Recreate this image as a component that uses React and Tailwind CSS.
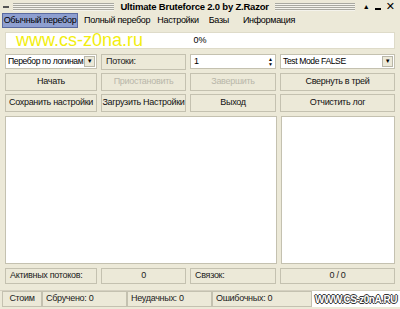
const font = { fontFamily: '"Liberation Sans", "DejaVu Sans", sans-serif' }

function Stripes({ className }) {
  return (
    <div
      className={`h-[8px] bg-[repeating-linear-gradient(to_bottom,#a8a8a0_0px,#a8a8a0_1px,#f4f3ec_1px,#f4f3ec_2px)] ${className}`}
    ></div>
  )
}

function Btn({ children, disabled }) {
  return (
    <div
      className={`h-[18px] flex items-center justify-center whitespace-nowrap border border-[#c4c1b0] bg-[#ece9d8] text-[9px] tracking-[-0.3px] ${
        disabled ? 'text-[#b9b7aa]' : 'text-[#111]'
      }`}
    >
      {children}
    </div>
  )
}

function Panel({ children, center }) {
  return (
    <div
      className={`h-[16px] flex items-center whitespace-nowrap border border-[#c4c1b0] bg-[#ece9d8] text-[9px] tracking-[-0.3px] text-[#222] px-[4px] ${
        center ? 'justify-center' : ''
      }`}
    >
      {children}
    </div>
  )
}

function Combo({ children }) {
  return (
    <div className="h-[15px] flex items-center justify-between whitespace-nowrap border border-[#c4c1b0] bg-white text-[8.6px] tracking-[-0.4px] pl-[2px] pr-[1px]">
      <span>{children}</span>
      <span className="w-[11px] h-[11px] flex items-center justify-center bg-[#ece9d8] border border-[#b8b6a8] text-[6px]">▼</span>
    </div>
  )
}

export default function App() {
  return (
    <div className="w-[400px] h-[309px] bg-[#ece9d8] flex flex-col text-black overflow-hidden" style={font}>
      {/* Title bar */}
      <div className="h-[13px] flex items-center px-[3px] gap-[4px]">
        <span className="w-[6px] h-[2px] bg-[#555]"></span>
        <Stripes className="flex-1" />
        <span className="text-[9.5px] font-bold leading-none tracking-[-0.2px] px-[2px] whitespace-nowrap">Ultimate Bruteforce 2.0 by Z.Razor</span>
        <Stripes className="w-[80px]" />
        <div className="flex items-center gap-[5px] pl-[4px] pr-[2px] text-[9px] leading-none">
          <span className="text-[7px]">▲</span>
          <span className="w-[6px] h-[2px] bg-black mt-[5px]"></span>
          <span className="text-[11px] font-bold">✕</span>
        </div>
      </div>

      {/* Menu */}
      <div className="h-[15px] flex items-center text-[9px] tracking-[-0.3px] pl-[2px] whitespace-nowrap">
        <span className="h-[15px] w-[76px] flex items-center justify-center bg-[#8e9fd0] border border-[#5a6aa0]">Обычный перебор</span>
        <span className="ml-[6px]">Полный перебор</span>
        <span className="ml-[7px]">Настройки</span>
        <span className="ml-[10px]">Базы</span>
        <span className="ml-[14px]">Информация</span>
      </div>

      <div className="px-[5px] pt-[4px] flex flex-col">
        {/* Progress */}
        <div className="h-[17px] bg-white border border-[#dedbc9] relative flex items-center justify-center text-[9px]">
          <span className="absolute left-[10px] top-[-2px] text-[18px] leading-[19px] text-[#f2ee10]">www.cs-z0na.ru</span>
          <span>0%</span>
        </div>

        {/* Rows */}
        <div className="grid grid-cols-[92px_85px_86px_1fr] gap-x-[4px] gap-y-[3px] mt-[5px]">
          <Combo>Перебор по логинам</Combo>
          <Panel>Потоки:</Panel>
          <div className="h-[15px] flex items-center justify-between border border-[#c4c1b0] bg-white text-[9px] pl-[3px] pr-[2px]">
            <span>1</span>
            <span className="flex flex-col leading-none text-[5px]">
              <span>▲</span>
              <span>▼</span>
            </span>
          </div>
          <Combo>Test Mode FALSE</Combo>

          <Btn>Начать</Btn>
          <Btn disabled>Приостановить</Btn>
          <Btn disabled>Завершить</Btn>
          <Btn>Свернуть в трей</Btn>

          <Btn>Сохранить настройки</Btn>
          <Btn>Загрузить Настройки</Btn>
          <Btn>Выход</Btn>
          <Btn>Отчистить лог</Btn>
        </div>

        {/* Logs */}
        <div className="flex gap-[4px] mt-[4px] h-[148px]">
          <div className="w-[272px] bg-white border border-[#c4c1b0]"></div>
          <div className="flex-1 bg-white border border-[#c4c1b0]"></div>
        </div>

        {/* Counters */}
        <div className="grid grid-cols-[92px_85px_86px_1fr] gap-x-[4px] mt-[4px]">
          <Panel>Активных потоков:</Panel>
          <Panel center>0</Panel>
          <Panel>Связок:</Panel>
          <Panel center>0 / 0</Panel>
        </div>
      </div>

      {/* Status bar */}
      <div className="mt-[6px] h-[17px] flex items-stretch border-t border-[#d4d0c0] text-[9px] tracking-[-0.3px] text-[#222] pl-[2px] whitespace-nowrap">
        <div className="w-[40px] flex items-center justify-center border border-[#c4c1b0]">Стоим</div>
        <div className="w-[85px] flex items-center pl-[3px] border border-[#c4c1b0]">Сбручено: 0</div>
        <div className="w-[85px] flex items-center pl-[3px] border border-[#c4c1b0]">Неудачных: 0</div>
        <div className="w-[100px] flex items-center pl-[3px] border border-[#c4c1b0]">Ошибочных: 0</div>
        <div className="flex-1 flex items-center justify-center bg-white">
          <span className="text-[10px] font-bold text-white tracking-[-0.5px] [text-shadow:1px_0_0_#333,-1px_0_0_#333,0_1px_0_#333,0_-1px_0_#333]">
            WWW.CS-z0nA.RU
          </span>
        </div>
      </div>
    </div>
  )
}
